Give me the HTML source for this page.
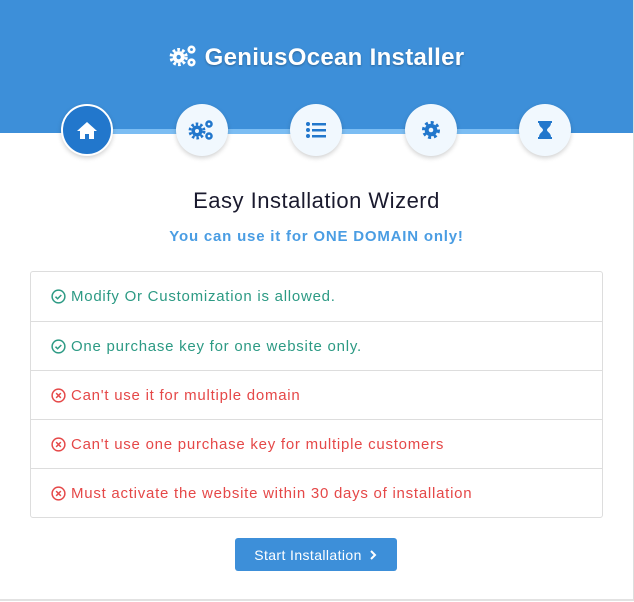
<!DOCTYPE html>
<html><head><style>
*{margin:0;padding:0;box-sizing:border-box}
body{width:634px;height:602px;background:#fff;font-family:"Liberation Sans",sans-serif;position:relative;overflow:hidden}
.frame{position:absolute;left:0;top:0;width:634px;height:601px;border-right:1px solid #ddd;border-bottom:2px solid #e2e2e2}
.hdr{position:absolute;left:0;top:0;width:633px;height:133px;background:#3d8fd9}
.title{position:absolute;top:44px;left:0;width:633px;text-align:center;color:#fff;font-size:24px;font-weight:bold;letter-spacing:0.3px;text-shadow:0 1px 2px rgba(0,0,0,.3)}
.line{position:absolute;left:87px;width:458px;top:129px;height:5px;background:#7bbdf3}
.c{position:absolute;width:52px;height:52px;border-radius:50%;background:#f1f8fe;top:104px;box-shadow:0 2px 5px rgba(0,0,0,.18);display:flex;align-items:center;justify-content:center}
.c.a{background:#2277cc;border:2px solid #fff}
h2{position:absolute;top:188px;width:633px;text-align:center;font-weight:normal;font-size:22px;letter-spacing:0.5px;color:#1a1a2e}
.sub{position:absolute;top:228px;width:633px;text-align:center;font-weight:bold;font-size:15px;letter-spacing:0.8px;color:#4a9de3}
.box{position:absolute;left:30px;top:271px;width:573px;border:1px solid #ddd;border-radius:3px}
.r{height:49px;border-top:1px solid #ddd;padding-left:20px;display:flex;align-items:center;font-size:15px;letter-spacing:0.75px}
.r:first-child{border-top:none}
.g{color:#2c9a84}.x{color:#e54848}
.r svg{margin-right:5px}
.btn{position:absolute;left:235px;top:538px;width:162px;height:33px;background:#3d8fd9;border-radius:3px;color:#fff;font-size:14px;letter-spacing:0.4px;display:flex;align-items:center;justify-content:center}
</style></head><body>
<div class="frame"></div>
<div class="hdr"></div>
<div class="title"><svg width="30" height="24" viewBox="0 0 28 22" style="vertical-align:-3px;margin-right:6px"><circle cx="9" cy="12" r="7" fill="none" stroke="#fff" stroke-width="3" stroke-dasharray="2.5 2"/><circle cx="9" cy="12" r="5.5" fill="#fff"/><circle cx="9" cy="12" r="2" fill="#3d8fd9"/><circle cx="21" cy="5" r="3.8" fill="#fff"/><circle cx="21" cy="5" r="1.3" fill="#3d8fd9"/><circle cx="21" cy="17" r="3.8" fill="#fff"/><circle cx="21" cy="17" r="1.3" fill="#3d8fd9"/></svg>GeniusOcean Installer</div>
<div class="line"></div>
<div class="c a" style="left:61px"><svg width="22" height="20" viewBox="0 0 22 20"><path d="M11 2L1 11h3v8h5v-5h4v5h5v-8h3z" fill="#fff"/></svg></div>
<div class="c" style="left:176px"><svg width="28" height="22" viewBox="0 0 28 22"><circle cx="9" cy="12" r="7" fill="none" stroke="#2277cc" stroke-width="3" stroke-dasharray="2.5 2"/><circle cx="9" cy="12" r="5.5" fill="#2277cc"/><circle cx="9" cy="12" r="2" fill="#f1f8fe"/><circle cx="21" cy="5" r="3.8" fill="#2277cc"/><circle cx="21" cy="5" r="1.3" fill="#f1f8fe"/><circle cx="21" cy="17" r="3.8" fill="#2277cc"/><circle cx="21" cy="17" r="1.3" fill="#f1f8fe"/></svg></div>
<div class="c" style="left:290px"><svg width="20" height="16" viewBox="0 0 20 16"><g fill="#2277cc"><circle cx="2" cy="2" r="2"/><circle cx="2" cy="8" r="2"/><circle cx="2" cy="14" r="2"/><rect x="6" y="1" width="14" height="2.5"/><rect x="6" y="7" width="14" height="2.5"/><rect x="6" y="13" width="14" height="2.5"/></g></svg></div>
<div class="c" style="left:405px"><svg width="18" height="18" viewBox="0 0 18 18"><circle cx="9" cy="9" r="7.5" fill="none" stroke="#2277cc" stroke-width="3" stroke-dasharray="3 2.8"/><circle cx="9" cy="9" r="6.3" fill="#2277cc"/><circle cx="9" cy="9" r="2.3" fill="#f1f8fe"/></svg></div>
<div class="c" style="left:519px"><svg width="14" height="18" viewBox="0 0 14 18"><path d="M0 0h14v2h-1c0 4-4 5-4 7s4 3 4 7h1v2H0v-2h1c0-4 4-5 4-7S1 6 1 2H0z" fill="#2277cc"/></svg></div>
<h2>Easy Installation Wizerd</h2>
<div class="sub">You can use it for ONE DOMAIN only!</div>
<div class="box">
<div class="r g"><svg width="15" height="15" viewBox="0 0 16 16"><circle cx="8" cy="8" r="6.8" fill="none" stroke="#2c9a84" stroke-width="1.6"/><path d="M4.8 8.2l2.2 2.2 4-4" fill="none" stroke="#2c9a84" stroke-width="1.6"/></svg>Modify Or Customization is allowed.</div>
<div class="r g"><svg width="15" height="15" viewBox="0 0 16 16"><circle cx="8" cy="8" r="6.8" fill="none" stroke="#2c9a84" stroke-width="1.6"/><path d="M4.8 8.2l2.2 2.2 4-4" fill="none" stroke="#2c9a84" stroke-width="1.6"/></svg>One purchase key for one website only.</div>
<div class="r x"><svg width="15" height="15" viewBox="0 0 16 16"><circle cx="8" cy="8" r="6.8" fill="none" stroke="#e54848" stroke-width="1.6"/><path d="M5.5 5.5l5 5M10.5 5.5l-5 5" stroke="#e54848" stroke-width="1.6"/></svg>Can't use it for multiple domain</div>
<div class="r x"><svg width="15" height="15" viewBox="0 0 16 16"><circle cx="8" cy="8" r="6.8" fill="none" stroke="#e54848" stroke-width="1.6"/><path d="M5.5 5.5l5 5M10.5 5.5l-5 5" stroke="#e54848" stroke-width="1.6"/></svg>Can't use one purchase key for multiple customers</div>
<div class="r x"><svg width="15" height="15" viewBox="0 0 16 16"><circle cx="8" cy="8" r="6.8" fill="none" stroke="#e54848" stroke-width="1.6"/><path d="M5.5 5.5l5 5M10.5 5.5l-5 5" stroke="#e54848" stroke-width="1.6"/></svg>Must activate the website within 30 days of installation</div>
</div>
<div class="btn">Start Installation <svg width="10" height="12" viewBox="0 0 10 12" style="margin-left:6px"><path d="M3 2l4 4-4 4" fill="none" stroke="#fff" stroke-width="2"/></svg></div>
</body></html>
